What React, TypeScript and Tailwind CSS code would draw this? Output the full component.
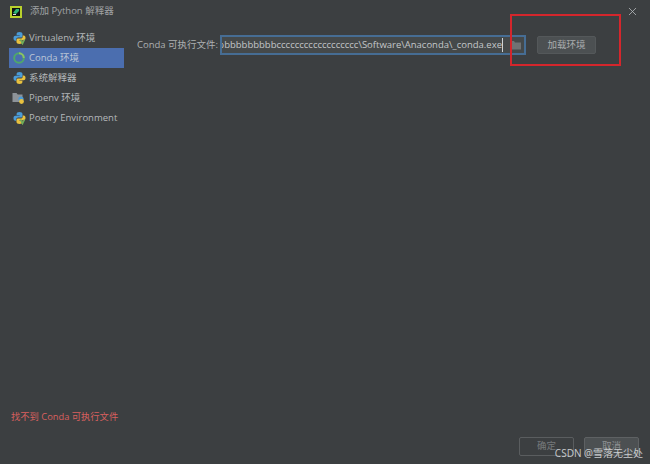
import { X } from 'lucide-react'

const font = "font-['Open_Sans','Noto_Sans_CJK_SC',sans-serif]"

function PythonIcon({ badge }: { badge?: boolean }) {
  return (
    <svg width="13" height="14" viewBox="0 0 13 14" className="shrink-0">
      <path d="M6.5 1C4.4 1 3.6 1.700 3.600 3v1.300h3v.5H2.400C1 4.800.5 5.900.5 7.200s.6 2.600 1.800 2.600h1V8.400c0-1 .9-1.800 1.900-1.800h2.700c.9 0 1.600-.7 1.600-1.600V3c0-1.200-1.200-2-3-2z" fill="#4b9bd6" />
      <path d="M6.500 13c2.100 0 2.900-.7 2.900-2V9.700h-3v-.5h4.200c1.400 0 1.900-1.100 1.900-2.400s-.6-2.400-1.800-2.400h-1v1.400c0 1-.9 1.800-1.900 1.800H5.100c-.9 0-1.600.7-1.600 1.600V11c0 1.200 1.200 2 3 2z" fill="#e8c13f" />
      {badge && <path d="M7.500 8.500l2 4 2-4" fill="none" stroke="#6fae5a" strokeWidth="1.600" />}
    </svg>
  )
}

function CondaIcon() {
  return (
    <svg width="14" height="14" viewBox="0 0 14 14" className="shrink-0">
      <circle cx="7" cy="7" r="4.800" fill="none" stroke="#4fa86a" strokeWidth="2" />
      <path d="M7 2.200A4.800 4.800 0 0 1 11.800 7" fill="none" stroke="#8cc265" strokeWidth="2" />
    </svg>
  )
}

function PipenvIcon() {
  return (
    <svg width="14" height="14" viewBox="0 0 14 14" className="shrink-0">
      <path d="M0.500 2h4l1.200 1.400h4.800V11h-10z" fill="#8d9399" />
      <circle cx="9" cy="8" r="2.600" fill="#4b9bd6" />
      <circle cx="9.500" cy="10.500" r="2.400" fill="#e8c13f" />
    </svg>
  )
}

function Row({ icon, label, active }: { icon: React.ReactNode; label: string; active?: boolean }) {
  return (
    <div className={`flex h-5 items-center gap-[3px] pl-[3px] text-[9.5px] ${active ? 'bg-[#4b6eaf] text-[#bcc6d6]' : 'text-[#b4b8ba]'}`}>
      <span className="flex w-[14px] justify-center">{icon}</span>
      <span className="whitespace-nowrap">{label}</span>
    </div>
  )
}

export default function App() {
  return (
    <div className={`relative flex h-[464px] w-[650px] flex-col overflow-hidden bg-[#3c3f41] ${font}`}>
      <div className="flex h-[22px] shrink-0 items-center pl-[10px] pr-[12px] pt-px">
        <svg width="12" height="12" viewBox="0 0 12 12">
          <rect width="12" height="12" fill="#b9d12c" />
          <rect x="2" y="2" width="8" height="8" fill="#111" />
          <path d="M3 7l3-4h3v2L6 8z" fill="#2fb574" />
          <rect x="3" y="8" width="3" height="1" fill="#ddd" />
        </svg>
        <span className="ml-[8px] text-[9.5px] text-[#a0a3a5]">添加 Python 解释器</span>
        <X size={13} strokeWidth={1.500} className="ml-auto -mr-[1px] text-[#b4b8ba]" />
      </div>

      <div className="flex min-h-0 flex-1">
        <div className="flex w-[124px] shrink-0 flex-col pl-[9px] pt-[6px]">
          <Row icon={<PythonIcon badge />} label="Virtualenv 环境" />
          <Row icon={<CondaIcon />} label="Conda 环境" active />
          <Row icon={<PythonIcon />} label="系统解释器" />
          <Row icon={<PipenvIcon />} label="Pipenv 环境" />
          <Row icon={<PythonIcon badge />} label="Poetry Environment" />
          <div className="mt-auto pb-[40px] pl-[2px] text-[9.3px] text-[#d9605f]">找不到 Conda 可执行文件</div>
        </div>

        <div className="flex min-w-0 flex-1 flex-col pr-[11px]">
          <div className="flex items-center pl-[13px] pt-[13px]">
            <span className="w-[83px] shrink-0 whitespace-nowrap text-[9.5px] text-[#adb0b2]">Conda 可执行文件:</span>
            <div className="flex h-5 w-[306px] shrink-0 items-center overflow-hidden border-2 border-[#466d94] bg-[#45494a]">
              <span className="min-w-0 flex-1 overflow-hidden whitespace-nowrap pl-[3px] text-[9.5px] text-[#c4c7c9]" dir="rtl">
                <bdi>bbbbbbbbbbbbbbbbcccccccccccccccccc\Software\Anaconda\_conda.exe</bdi>
              </span>
              <span className="h-[14px] w-px shrink-0 bg-[#cfd2d4]" />
              <svg width="13" height="10" viewBox="0 0 13 10" className="ml-[6px] mr-[2px] shrink-0">
                <path d="M1 1h4l1 1.500h6V9.500H1z" fill="#6f7274" />
              </svg>
            </div>
            <div className="ml-[11px] flex h-[18px] w-[59px] shrink-0 items-center justify-center rounded-[2px] border border-[#54585a] bg-[#4c5052] text-[9.5px] text-[#a9acae]">
              加载环境
            </div>
          </div>

          <div className="mt-auto flex justify-end gap-[10px] pb-[8px]">
            <div className="flex h-[19px] w-[55px] items-center justify-center rounded-[2px] border border-[#5a5d5f] text-[9.5px] text-[#777a7c]">确定</div>
            <div className="flex h-[19px] w-[55px] items-center justify-center rounded-[2px] border border-[#5e6163] bg-[#4c5052] text-[9.5px] text-[#8f9294]">取消</div>
          </div>
        </div>
      </div>

      <div className="absolute left-[510px] top-[14px] h-[52px] w-[111px] border-2 border-[#d4262c]" />
      <div className="absolute right-[7px] top-[446px] text-[10px] leading-[14px] text-[#c9cbcd]">CSDN @雪落无尘处</div>
    </div>
  )
}
